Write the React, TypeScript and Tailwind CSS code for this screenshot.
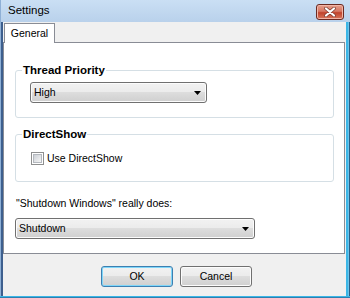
import React from "react";

function ComboArrow() {
  return (
    <svg width="7" height="4" viewBox="0 0 7 4" className="block">
      <polygon points="0,0 7,0 3.5,4" fill="#000" />
    </svg>
  );
}

function Combo({ value, width }: { value: string; width: string }) {
  return (
    <div
      className={`${width} h-[21px] flex items-center pl-[3px] pr-[5px] border border-[#707070] rounded-[3px] bg-[linear-gradient(to_bottom,#f2f2f2_0%,#ebebeb_50%,#dddddd_50%,#cfcfcf_100%)] shadow-[inset_0_0_0_1px_#fcfcfc]`}
    >
      <span className="flex-1 text-[10.5px] leading-none text-black">{value}</span>
      <ComboArrow />
    </div>
  );
}

function GroupBox({ title, children }: { title: string; children: React.ReactNode }) {
  return (
    <div className="ml-[11px] w-[319px] h-[48px] border border-[#d5dfe5] rounded-[3px] shadow-[inset_1px_1px_0_#ffffff]">
      <div className="-mt-[8px] ml-[6px] w-fit px-[1px] bg-white text-[11.5px] leading-[14px] font-bold text-black">
        {title}
      </div>
      {children}
    </div>
  );
}

function Button({ label, focused }: { label: string; focused?: boolean }) {
  return (
    <button
      className={`w-[72px] h-[21px] rounded-[3px] border text-[10.5px] text-black leading-none bg-[linear-gradient(to_bottom,#f2f2f2_0%,#ebebeb_50%,#dddddd_50%,#cfcfcf_100%)] ${
        focused
          ? "border-[#3c7fb1] shadow-[inset_0_0_0_1px_#7fd6f9]"
          : "border-[#707070] shadow-[inset_0_0_0_1px_#fcfcfc]"
      }`}
    >
      {label}
    </button>
  );
}

export default function App() {
  return (
    <div className="w-[350px] h-[298px] flex flex-col bg-[#bfd5ef] font-['Liberation_Sans',Arial,sans-serif] select-none">
      {/* Title bar */}
      <div className="h-[22px] flex items-center pl-[7px] pr-[6px] bg-[linear-gradient(to_bottom,#cadff4,#b9d1eb)] border-l border-[#8fb0d6]">
        <span className="text-[11.5px] text-black">Settings</span>
        <div className="ml-auto mt-[2px] w-[28px] h-[16px] flex items-center justify-center rounded-[3px] border border-[#6b2a22] bg-[linear-gradient(to_bottom,#e6a08f_0%,#d67763_45%,#c0432c_55%,#d8765c_100%)] shadow-[inset_0_0_0_1px_#f1b6a8]">
          <svg width="12" height="10" viewBox="0 0 12 10">
            <path d="M2 1.5 L10 8.5 M10 1.5 L2 8.5" stroke="#7a3b30" strokeWidth="3.6" strokeLinecap="round" />
            <path d="M2 1.5 L10 8.5 M10 1.5 L2 8.5" stroke="#ffffff" strokeWidth="2.2" strokeLinecap="round" />
          </svg>
        </div>
      </div>

      {/* Body */}
      <div className="flex-1 flex">
        <div className="w-[3px] flex">
          <div className="w-[1px] bg-[#8fb0d6]" />
          <div className="w-[2px] bg-[#3d5f8e]" />
        </div>

        {/* Client area */}
        <div className="w-[343px] bg-[#f0f0f0] flex flex-col">
          {/* Tab strip */}
          <div className="h-[20px] flex items-end pl-[1px]">
            <div className="relative z-10 -mb-[1px] h-[20px] w-[51px] bg-white border border-b-0 border-[#898c95] flex items-center justify-center text-[10.5px] text-black">
              General
            </div>
          </div>

          {/* Tab panel */}
          <div className="w-[342px] h-[212px] bg-white border border-[#898c95]">
            <div className="mt-[27px]">
              <GroupBox title="Thread Priority">
                <div className="mt-[5px] ml-[14px]">
                  <Combo value="High" width="w-[177px]" />
                </div>
              </GroupBox>
            </div>

            <div className="mt-[16px]">
              <GroupBox title="DirectShow">
                <div className="mt-[11px] ml-[15px] flex items-center gap-[3px]">
                  <div className="w-[13px] h-[13px] border border-[#8e8f8f] bg-white p-[1px]">
                    <div className="w-full h-full border border-[#b4b8be] bg-[linear-gradient(135deg,#cbcfd5,#f6f6f6)]" />
                  </div>
                  <span className="text-[10.5px] leading-none text-black">Use DirectShow</span>
                </div>
              </GroupBox>
            </div>

            <div className="mt-[14px] ml-[12px] text-[10.5px] leading-[14px] text-black">
              "Shutdown Windows" really does:
            </div>
            <div className="mt-[8px] ml-[11px]">
              <Combo value="Shutdown" width="w-[240px]" />
            </div>
          </div>

          {/* Buttons */}
          <div className="mt-[12px] ml-[98px] flex gap-[7px]">
            <Button label="OK" focused />
            <Button label="Cancel" />
          </div>
        </div>

        <div className="w-[4px] flex">
          <div className="w-[2px] bg-[#3bb6e6]" />
          <div className="w-[1px] bg-[#6fc4ea]" />
          <div className="w-[1px] bg-[#2c5f86]" />
        </div>
      </div>

      {/* Bottom frame */}
      <div className="h-[2px] flex flex-col">
        <div className="h-[1px] bg-[#3bb6e6]" />
        <div className="h-[1px] bg-[#2c7fb0]" />
      </div>
    </div>
  );
}
